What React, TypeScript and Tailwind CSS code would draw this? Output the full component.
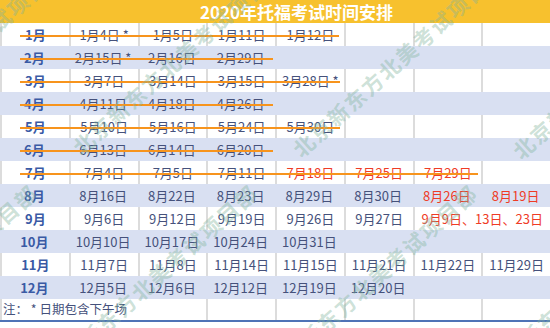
import React from 'react';

type Cell = { t?: string; red?: boolean; span?: number };
type Row = { m: string; cells: Cell[]; strike?: string };

const c = (t: string, red = false, span = 1): Cell => ({ t, red, span });

const rows: Row[] = [
  { m: '1月', cells: [c('1月4日 *'), c('1月5日'), c('1月11日'), c('1月12日')], strike: 'w-[319px]' },
  { m: '2月', cells: [c('2月15日 *'), c('2月16日'), c('2月29日')], strike: 'w-[253px]' },
  { m: '3月', cells: [c('3月7日'), c('3月14日'), c('3月15日'), c('3月28日 *')], strike: 'w-[320px]' },
  { m: '4月', cells: [c('4月11日'), c('4月18日'), c('4月26日')], strike: 'w-[253px]' },
  { m: '5月', cells: [c('5月10日'), c('5月16日'), c('5月24日'), c('5月30日')], strike: 'w-[320px]' },
  { m: '6月', cells: [c('6月13日'), c('6月14日'), c('6月20日')], strike: 'w-[253px]' },
  {
    m: '7月',
    cells: [c('7月4日'), c('7月5日'), c('7月11日'), c('7月18日', true), c('7月25日', true), c('7月29日', true)],
    strike: 'w-[458px]',
  },
  {
    m: '8月',
    cells: [c('8月16日'), c('8月22日'), c('8月23日'), c('8月29日'), c('8月30日'), c('8月26日', true), c('8月19日', true)],
  },
  {
    m: '9月',
    cells: [c('9月6日'), c('9月12日'), c('9月19日'), c('9月26日'), c('9月27日'), c('9月9日、13日、23日', true, 2)],
  },
  { m: '10月', cells: [c('10月10日'), c('10月17日'), c('10月24日'), c('10月31日')] },
  {
    m: '11月',
    cells: [c('11月7日'), c('11月8日'), c('11月14日'), c('11月15日'), c('11月21日'), c('11月22日'), c('11月29日')],
  },
  { m: '12月', cells: [c('12月5日'), c('12月6日'), c('12月12日'), c('12月19日'), c('12月20日')] },
];

const spanClass: Record<number, string> = { 1: 'col-span-1', 2: 'col-span-2', 3: 'col-span-3' };

// watermark copies, left/top of each rotated line
const marks = [
  'left-[-144px] top-[140px]',
  'left-[76px] top-[140px]',
  'left-[296px] top-[142px]',
  'left-[516px] top-[144px]',
  'left-[-171px] top-[363px]',
  'left-[49px] top-[363px]',
  'left-[269px] top-[363px]',
  'left-[489px] top-[363px]',
];

function TableRow({ row, index }: { row: Row; index: number }) {
  const white = index % 2 === 0;
  const cells: Cell[] = [...row.cells];
  const used = cells.reduce((n, x) => n + (x.span ?? 1), 0);
  for (let i = used; i < 7; i++) cells.push({});

  return (
    <div className={`relative grid h-[23px] grid-cols-8 ${white ? 'bg-white' : 'bg-[#d9e0f2]'}`}>
      <div
        className={`flex items-center justify-center font-bold text-[#3a5aa5] ${
          white ? 'border-l-2 border-[#dcdcdc]' : ''
        }`}
      >
        {row.m}
      </div>
      {cells.map((cell, i) => (
        <div
          key={i}
          className={`flex items-center justify-center whitespace-nowrap ${spanClass[cell.span ?? 1]} ${
            white ? 'border-l-2 border-[#dcdcdc]' : ''
          } ${cell.red ? 'text-[#ef3b26]' : 'text-[#45517b]'}`}
        >
          {cell.t}
        </div>
      ))}
      {row.strike && <div className={`absolute left-[20px] top-[12px] h-[2px] bg-[#f7941d] ${row.strike}`} />}
    </div>
  );
}

export default function App() {
  return (
    <div className="relative h-[328px] w-[550px] overflow-hidden bg-white font-['Noto_Sans_CJK_SC',sans-serif] text-[13px]">
      <div className="flex h-[23px] items-center bg-[#f7c12e] pl-[200px] text-[17px] font-bold text-white">
        2020年托福考试时间安排
      </div>

      {rows.map((row, i) => (
        <TableRow key={row.m} row={row} index={i} />
      ))}

      {/* note row */}
      <div className="grid h-[23px] grid-cols-8 border-b-2 border-[#4f73b6] bg-white">
        <div className="col-span-3 flex items-center border-l-2 border-[#dcdcdc] pl-[1px] text-[12.5px] text-[#45517b]">
          注： * 日期包含下午场
        </div>
        <div className="border-l-2 border-[#dcdcdc]" />
        <div className="border-l-2 border-[#dcdcdc]" />
        <div className="border-l-2 border-[#dcdcdc]" />
        <div className="border-l-2 border-[#dcdcdc]" />
        <div className="border-l-2 border-[#dcdcdc]" />
      </div>

      {/* watermark */}
      <div className="pointer-events-none absolute inset-0 overflow-hidden">
        {marks.map((m) => (
          <span
            key={m}
            className={`absolute ${m} origin-left rotate-[-42deg] whitespace-nowrap text-[21px] leading-[21px] font-bold tracking-[2px] text-[#7fb39c]/40`}
          >
            北京新东方北美考试项目部
          </span>
        ))}
      </div>
    </div>
  );
}
